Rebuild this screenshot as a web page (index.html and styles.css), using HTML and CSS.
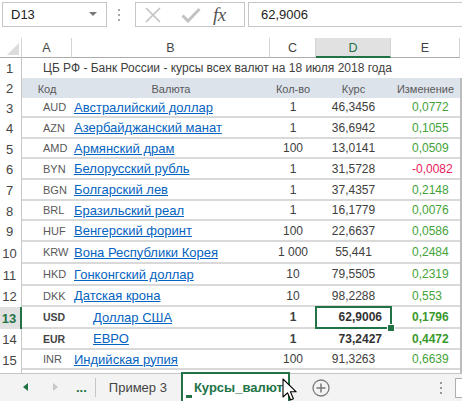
FILE: index.html
```html
<!DOCTYPE html>
<html>
<head>
<meta charset="utf-8">
<link rel="stylesheet" href="styles.css">
</head>
<body>
<div class="fbar">
  <div class="namebox">
    <span class="nb-text">D13</span>
    <svg class="dd" width="8" height="5" viewBox="0 0 8 5"><path d="M0 0H8L4 4Z" fill="#777"/></svg>
  </div>
  <svg class="vdots" width="4" height="14" viewBox="0 0 4 14"><rect x="1" y="1" width="2" height="2" fill="#aaa"/><rect x="1" y="6" width="2" height="2" fill="#aaa"/><rect x="1" y="11" width="2" height="2" fill="#aaa"/></svg>
  <div class="fbtns">
    <svg class="ic-x" width="18" height="16" viewBox="0 0 18 16"><path d="M2 1L16 15M16 1L2 15" stroke="#c2c2c2" stroke-width="1.6" fill="none"/></svg>
    <svg class="ic-ok" width="20" height="16" viewBox="0 0 20 16"><path d="M1.5 8.5L7 14L18.5 2" stroke="#c2c2c2" stroke-width="3" fill="none"/></svg>
    <span class="fx">fx</span>
  </div>
  <div class="finput">62,9006</div>
</div>

<div class="sheet">
  <div class="row head">
    <div class="corner"><svg width="12" height="12" viewBox="0 0 12 12"><path d="M12 0V12H0Z" fill="#dcdcdc"/></svg></div>
    <div class="ch">A</div>
    <div class="ch">B</div>
    <div class="ch">C</div>
    <div class="ch sel">D</div>
    <div class="ch">E</div>
  </div>

  <div class="row h20">
    <div class="rh">1</div>
    <div class="title">ЦБ РФ - Банк России - курсы всех валют на 18 июля 2018 года</div>
  </div>

  <div class="row h20 hdr">
    <div class="rh">2</div>
    <div class="c th">Код</div>
    <div class="c th">Валюта</div>
    <div class="c th">Кол-во</div>
    <div class="c th">Курс</div>
    <div class="c th">Изменение</div>
  </div>

  <div class="row h20 data">
    <div class="rh">3</div>
    <div class="c code">AUD</div>
    <div class="c name"><a>Австралийский доллар</a></div>
    <div class="c qty">1</div>
    <div class="c rate">46,3456</div>
    <div class="c chg">0,0772</div>
  </div>
  <div class="row h21 data">
    <div class="rh">4</div>
    <div class="c code">AZN</div>
    <div class="c name"><a>Азербайджанский манат</a></div>
    <div class="c qty">1</div>
    <div class="c rate">36,6942</div>
    <div class="c chg">0,1055</div>
  </div>
  <div class="row h20 data">
    <div class="rh">5</div>
    <div class="c code">AMD</div>
    <div class="c name"><a>Армянский драм</a></div>
    <div class="c qty">100</div>
    <div class="c rate">13,0141</div>
    <div class="c chg">0,0509</div>
  </div>
  <div class="row h21 data">
    <div class="rh">6</div>
    <div class="c code">BYN</div>
    <div class="c name"><a>Белорусский рубль</a></div>
    <div class="c qty">1</div>
    <div class="c rate">31,5728</div>
    <div class="c chg neg">-0,0082</div>
  </div>
  <div class="row h21 data">
    <div class="rh">7</div>
    <div class="c code">BGN</div>
    <div class="c name"><a>Болгарский лев</a></div>
    <div class="c qty">1</div>
    <div class="c rate">37,4357</div>
    <div class="c chg">0,2148</div>
  </div>
  <div class="row h20 data">
    <div class="rh">8</div>
    <div class="c code">BRL</div>
    <div class="c name"><a>Бразильский реал</a></div>
    <div class="c qty">1</div>
    <div class="c rate">16,1779</div>
    <div class="c chg">0,0076</div>
  </div>
  <div class="row h21 data">
    <div class="rh">9</div>
    <div class="c code">HUF</div>
    <div class="c name"><a>Венгерский форинт</a></div>
    <div class="c qty">100</div>
    <div class="c rate">22,6637</div>
    <div class="c chg">0,0586</div>
  </div>
  <div class="row h22 data">
    <div class="rh">10</div>
    <div class="c code">KRW</div>
    <div class="c name"><a>Вона Республики Корея</a></div>
    <div class="c qty">1 000</div>
    <div class="c rate">55,441</div>
    <div class="c chg">0,2484</div>
  </div>
  <div class="row h22 data">
    <div class="rh">11</div>
    <div class="c code">HKD</div>
    <div class="c name"><a>Гонконгский доллар</a></div>
    <div class="c qty">10</div>
    <div class="c rate">79,5505</div>
    <div class="c chg">0,2319</div>
  </div>
  <div class="row h21 data">
    <div class="rh">12</div>
    <div class="c code">DKK</div>
    <div class="c name"><a>Датская крона</a></div>
    <div class="c qty">10</div>
    <div class="c rate">98,2288</div>
    <div class="c chg">0,553</div>
  </div>
  <div class="row h22 data bold">
    <div class="rh cur">13</div>
    <div class="c code">USD</div>
    <div class="c name indent"><a>Доллар США</a></div>
    <div class="c qty">1</div>
    <div class="c rate active">62,9006</div>
    <div class="c chg">0,1796</div>
  </div>
  <div class="row h21 data bold">
    <div class="rh">14</div>
    <div class="c code">EUR</div>
    <div class="c name indent"><a>ЕВРО</a></div>
    <div class="c qty">1</div>
    <div class="c rate">73,2427</div>
    <div class="c chg">0,4472</div>
  </div>
  <div class="row h20 data">
    <div class="rh">15</div>
    <div class="c code">INR</div>
    <div class="c name"><a>Индийская рупия</a></div>
    <div class="c qty">100</div>
    <div class="c rate">91,3263</div>
    <div class="c chg">0,6639</div>
  </div>
  <div class="row tail">
    <div class="rh"></div>
  </div>
</div>

<div class="tabs">
  <svg class="nav" width="8" height="10" viewBox="0 0 8 10"><path d="M6 1V9L1 5Z" fill="#217346"/></svg>
  <svg class="nav nav2" width="8" height="10" viewBox="0 0 8 10"><path d="M2 1V9L7 5Z" fill="#c8c8c8"/></svg>
  <span class="more">...</span>
  <div class="tab">Пример 3</div>
  <div class="tab active">Курсы_валют</div>
  <svg class="add" width="18" height="18" viewBox="0 0 18 18"><circle cx="9" cy="9" r="8" fill="none" stroke="#7a7a7a" stroke-width="1.3"/><path d="M9 4.5V13.5M4.5 9H13.5" stroke="#7a7a7a" stroke-width="1.5"/></svg>
  <svg class="tdots" width="4" height="14" viewBox="0 0 4 14"><rect x="1" y="1" width="2" height="2" fill="#999"/><rect x="1" y="6" width="2" height="2" fill="#999"/><rect x="1" y="11" width="2" height="2" fill="#999"/></svg>
  <div class="scrollstub"></div>
  <svg class="cursor" width="16" height="24" viewBox="0 0 16 24"><path d="M1 1V19L5.5 14.8L8.6 22L11.4 20.8L8.4 13.8H14.2Z" fill="#fff" stroke="#000" stroke-width="1.1" stroke-linejoin="round"/></svg>
</div>
</body>
</html>
```

FILE: styles.css
```css
* { box-sizing: border-box; }
html, body { margin: 0; padding: 0; }
body {
  width: 462px;
  height: 401px;
  overflow: hidden;
  background: #fff;
  font-family: "Liberation Sans", Arial, sans-serif;
  color: #404040;
  position: relative;
}

/* formula bar */
.fbar {
  height: 38px;
  display: flex;
  align-items: flex-start;
  padding-top: 2px;
}
.namebox {
  margin-left: 2px;
  width: 105px;
  height: 25px;
  border: 1px solid #c6c6c6;
  display: flex;
  align-items: center;
  padding-left: 8px;
  font-size: 13px;
  color: #222;
  flex-shrink: 0;
}
.nb-text { flex: 1; }
.dd { margin-right: 9px; }
.vdots { margin: 6px 14px 0 10px; flex-shrink: 0; }
.fbtns {
  width: 110px;
  height: 25px;
  border: 1px solid #c6c6c6;
  display: flex;
  align-items: center;
  padding-left: 8px;
  flex-shrink: 0;
}
.ic-x { margin-right: 19px; }
.ic-ok { margin-right: 12px; }
.fx {
  font-family: "Liberation Serif", "Times New Roman", serif;
  font-style: italic;
  font-size: 19px;
  color: #555;
  letter-spacing: -0.5px;
}
.finput {
  margin-left: 3px;
  flex: 1;
  height: 25px;
  border: 1px solid #c6c6c6;
  border-right: none;
  padding-left: 12px;
  font-size: 13px;
  color: #222;
  display: flex;
  align-items: center;
}

/* sheet */
.sheet { width: 462px; }
.row {
  display: grid;
  grid-template-columns: 22px 50px 198px 46px 75px 69px 2px;
  align-items: stretch;
}
.h20 { height: 20px; }
.h21 { height: 21px; }
.h22 { height: 22px; }
.head { height: 20px; }
.tail { height: 3px; }

.corner {
  border-right: 1px solid #d4d4d4;
  border-bottom: 1px solid #ababab;
  display: flex;
  align-items: flex-end;
  justify-content: flex-end;
  padding: 0 2px 2px 0;
}
.ch {
  border-right: 1px solid #d4d4d4;
  border-bottom: 1px solid #ababab;
  font-size: 12.5px;
  color: #444;
  display: flex;
  align-items: center;
  justify-content: center;
  padding-top: 1px;
}
.ch.sel {
  background: #e1e1e1;
  color: #217346;
  border-bottom: 2px solid #217346;
  padding-top: 2px;
}

.rh {
  border-right: 1px solid #c8c8c8;
  font-size: 13px;
  color: #444;
  display: flex;
  align-items: center;
  justify-content: center;
  padding-right: 2px;
}
.rh.cur {
  background: #e1e1e1;
  color: #217346;
  font-weight: bold;
  border-right: 2px solid #217346;
}

.title {
  grid-column: 2 / 7;
  font-size: 12px;
  color: #404040;
  padding-left: 21px;
  display: flex;
  align-items: center;
  white-space: nowrap;
}

.c {
  display: flex;
  align-items: center;
  white-space: nowrap;
}
.hdr .c { background: #dde3eb; }
.hdr::after, .data::after, .tail::after {
  content: "";
  background: #bcbcbc;
}
.tail::after { grid-column: 7; }
.data .c { border-bottom: 2px solid #d9d9d9; }

.th {
  justify-content: center;
  font-size: 11px;
  color: #595959;
  padding-top: 1px;
}
.code {
  padding-left: 21px;
  font-size: 11px;
  color: #595959;
}
.name { padding-left: 2px; font-size: 13px; }
.name a {
  color: #0563c1;
  text-decoration: underline;
  text-underline-offset: 1px;
}
.name.indent { padding-left: 21px; }
.qty { justify-content: center; font-size: 12px; }
.rate { justify-content: center; font-size: 12px; }
.chg {
  padding-left: 21px;
  font-size: 12px;
  color: #44a33a;
}
.chg.neg { color: #e8195a; }

.bold .code, .bold .qty, .bold .rate, .bold .chg { font-weight: bold; }
.bold .code { font-size: 10.5px; color: #444; }
.bold .rate { justify-content: flex-end; padding-right: 9px; color: #333; }
.bold .chg { color: #3a9a2e; }

.active { position: relative; }
.active::before {
  content: "";
  position: absolute;
  left: -1px; right: -1px; top: -1px; bottom: -2px;
  border: 2px solid #217346;
}
.active::after {
  content: "";
  position: absolute;
  right: -4px; bottom: -5px;
  width: 6px; height: 6px;
  background: #217346;
  border: 1px solid #fff;
}

/* tabs */
.tabs {
  position: relative;
  height: 28px;
  background: #f3f3f3;
  border-top: 1px solid #c6c6c6;
  display: flex;
  align-items: center;
}
.tabs > * { flex-shrink: 0; }
.nav { margin-left: 22px; margin-top: -1px; }
.nav2 { margin-left: 21px; }
.more {
  margin: 4px 0 4px 17px;
  font-weight: bold;
  font-size: 13px;
  color: #217346;
  padding-right: 8px;
  align-self: stretch;
  display: flex;
  align-items: center;
  border-right: 1px solid #c6c6c6;
}
.tab {
  align-self: stretch;
  display: flex;
  align-items: center;
  padding: 0 14px 0 13px;
  font-size: 13px;
  color: #444;
  white-space: nowrap;
}
.tab.active {
  background: #fff;
  margin-top: -1px;
  font-weight: bold;
  color: #217346;
  padding: 0 10px 0 12px;
  border-left: 1px solid #c6c6c6;
  border-right: 1px solid #c6c6c6;
  position: relative;
  width: 109px;
}
.tab.active::after {
  content: "";
  position: absolute;
  left: 3px;
  right: 10px;
  bottom: 2px;
  height: 3px;
  background: #217346;
}
.add { margin-left: 22px; }
.tdots { margin-left: 109px; }
.scrollstub {
  margin-left: 12px;
  width: 8px;
  height: 20px;
  border: 1px solid #b0b0b0;
  border-right: none;
  background: #fff;
}
.cursor {
  position: absolute;
  left: 282px;
  top: 4px;
}
```
